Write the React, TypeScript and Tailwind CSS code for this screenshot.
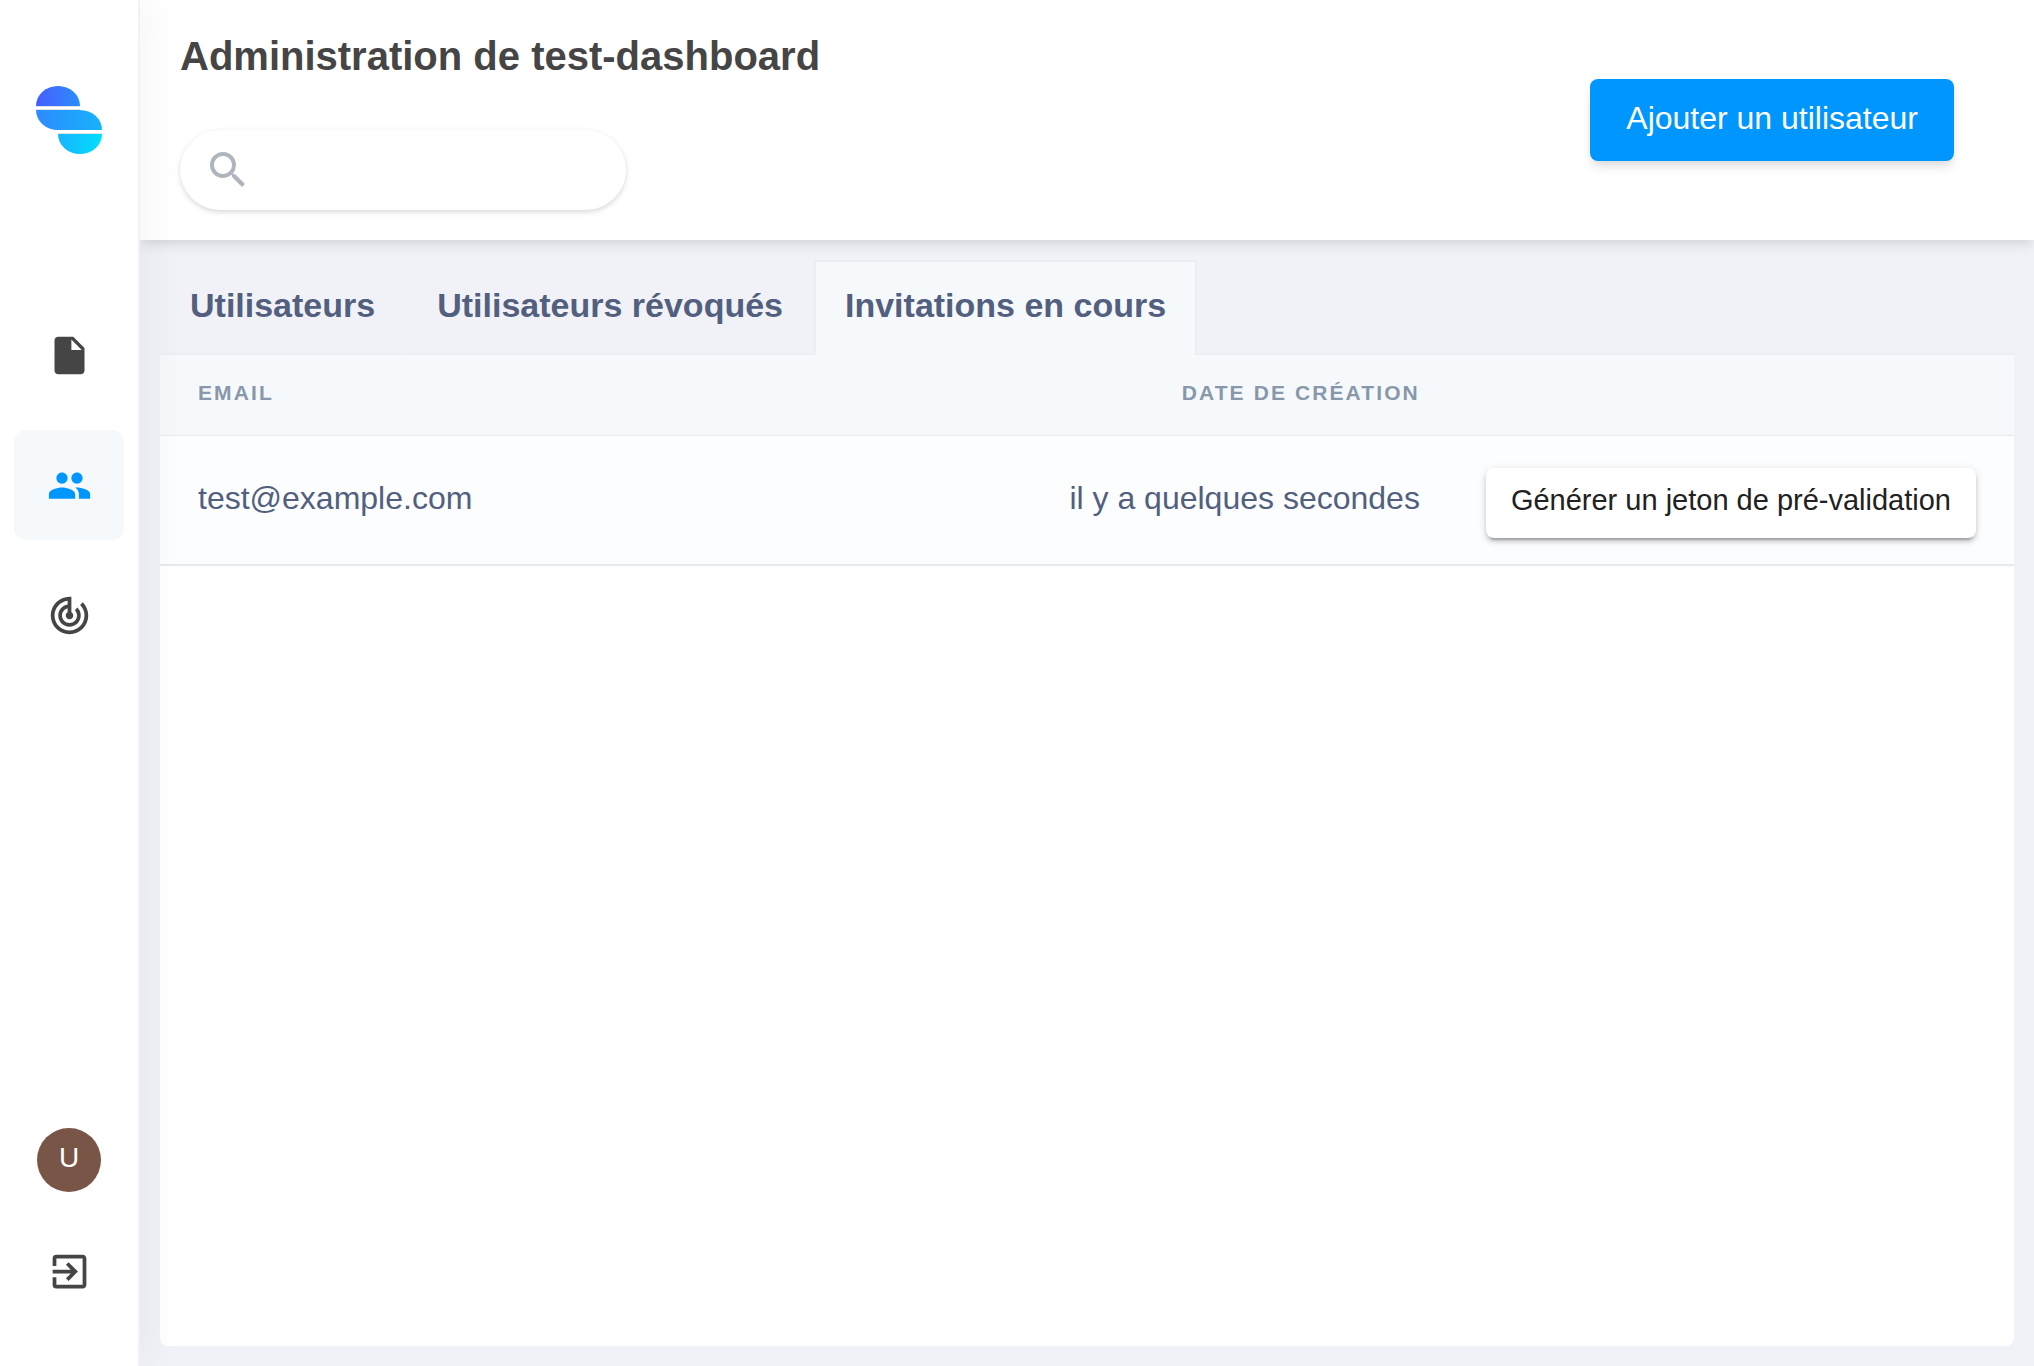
import { useState } from "react"
import {
    MdExitToApp,
    MdInsertDriveFile,
    MdPeople,
    MdSearch,
    MdTrackChanges
} from "react-icons/md"

type Invitation = {
    email: string
    createdAt: string
}

const tabs = ["Utilisateurs", "Utilisateurs révoqués", "Invitations en cours"]

const navItems = [
    { label: "Documents", icon: MdInsertDriveFile },
    { label: "Membres", icon: MdPeople },
    { label: "Suivi", icon: MdTrackChanges }
]

const invitations: Invitation[] = [
    { email: "test@example.com", createdAt: "il y a quelques secondes" }
]

function Logo() {
    return (
        <svg width="66" height="68" viewBox="0 0 66 68" aria-hidden="true">
            <defs>
                <linearGradient id="logo-top">
                    <stop offset="0" stopColor="#465dff" />
                    <stop offset="1" stopColor="#2b8eff" />
                </linearGradient>
                <linearGradient id="logo-middle">
                    <stop offset="0" stopColor="#2d8bff" />
                    <stop offset="1" stopColor="#18b2fb" />
                </linearGradient>
                <linearGradient id="logo-bottom">
                    <stop offset="0" stopColor="#18b4ff" />
                    <stop offset="1" stopColor="#00dffc" />
                </linearGradient>
            </defs>
            <path d="M0 20A22 20 0 0 1 44 20z" fill="url(#logo-top)" />
            <path d="M0 24H44A22 20 0 0 1 66 44H22A22 20 0 0 1 0 24z" fill="url(#logo-middle)" />
            <path d="M22 48H66A22 20 0 0 1 22 48z" fill="url(#logo-bottom)" />
            <path d="M0 20.5H44M0 23.5H44M22 47.5H66" stroke="#dfe3ea" strokeWidth="1" />
        </svg>
    )
}

function Sidebar() {
    const [current, setCurrent] = useState("Membres")

    return (
        <aside className="relative z-10 flex w-[140px] shrink-0 flex-col items-center border-r-2 border-[#f0f2f4] bg-white pt-[86px] pb-10 shadow-[0_0_50px_rgba(20,40,70,0.06)]">
            <a href="#" aria-label="Accueil" className="block">
                <Logo />
            </a>
            <nav className="mt-[146px] flex flex-col gap-5">
                {navItems.map(({ label, icon: Icon }) => (
                    <button
                        key={label}
                        type="button"
                        aria-label={label}
                        onClick={() => setCurrent(label)}
                        className={
                            label === current
                                ? "flex size-[110px] items-center justify-center rounded-xl bg-[#f5f9fc] text-[#0096ff]"
                                : "flex size-[110px] items-center justify-center rounded-xl text-[#454545]"
                        }
                    >
                        <Icon size={45} />
                    </button>
                ))}
            </nav>
            <div className="mt-auto flex flex-col items-center gap-6">
                <div className="flex size-16 items-center justify-center rounded-full bg-[#795548] pb-1 text-[28px] leading-8 text-white">
                    U
                </div>
                <button
                    type="button"
                    aria-label="Se déconnecter"
                    className="flex size-[110px] items-center justify-center text-[#454545]"
                >
                    <MdExitToApp size={45} />
                </button>
            </div>
        </aside>
    )
}

function Header() {
    const [search, setSearch] = useState("")

    return (
        <header className="relative flex items-center justify-between bg-white py-[30px] pr-20 pl-10 shadow-[0_8px_12px_-2px_rgba(0,0,0,0.08),0_4px_8px_-2px_rgba(0,0,0,0.05)]">
            <div className="flex flex-col gap-12">
                <h1 className="text-[40px] leading-[52px] font-bold text-[#454545]">
                    Administration de test-dashboard
                </h1>
                <label className="flex h-20 w-[446px] items-center gap-2 rounded-full bg-white px-6 shadow-[0_2px_6px_rgba(0,0,0,0.1),0_2px_4px_rgba(0,0,0,0.06)]">
                    <MdSearch size={48} className="shrink-0 text-[#adb5bd]" />
                    <input
                        type="search"
                        aria-label="Rechercher"
                        value={search}
                        onChange={(e) => setSearch(e.target.value)}
                        className="w-full min-w-0 bg-transparent text-[32px] text-[#525f7f] outline-none"
                    />
                </label>
            </div>
            <button
                type="button"
                className="h-[82px] rounded-lg bg-[#0096ff] px-9 pb-1 text-[32px] leading-10 text-white shadow-[0_8px_12px_-2px_rgba(0,0,0,0.1),0_4px_8px_-2px_rgba(0,0,0,0.06)]"
            >
                Ajouter un utilisateur
            </button>
        </header>
    )
}

function InvitationsTable() {
    return (
        <table className="w-full border-separate border-spacing-0">
            <thead>
                <tr className="h-[81px] bg-[#f5f9fc] text-[21px] leading-6 tracking-widest text-[#8898aa] uppercase">
                    <th className="border-b border-[#e6eaee] pb-1 pl-[38px] text-left font-bold">Email</th>
                    <th className="w-px border-b border-[#e6eaee] pb-1 text-right font-bold whitespace-nowrap">
                        Date de création
                    </th>
                    <th className="w-px border-b border-[#e6eaee]"></th>
                </tr>
            </thead>
            <tbody>
                {invitations.map((invitation) => (
                    <tr key={invitation.email} className="bg-[#fcfdff] text-[32px] leading-10 text-[#525f7f]">
                        <td className="border-b-2 border-[#e6eaee] pb-1 pl-[38px]">{invitation.email}</td>
                        <td className="w-px border-b-2 border-[#e6eaee] pb-1 text-right whitespace-nowrap">
                            {invitation.createdAt}
                        </td>
                        <td className="w-px border-b-2 border-[#e6eaee] pt-8 pr-[38px] pb-[26px] pl-[66px]">
                            <button
                                type="button"
                                className="block h-[70px] rounded-lg bg-white px-[25px] pb-1.5 text-[29px] leading-9 whitespace-nowrap text-[#212121] shadow-[0_6px_2px_-4px_rgba(0,0,0,0.2),0_4px_4px_rgba(0,0,0,0.14),0_2px_10px_rgba(0,0,0,0.12)]"
                            >
                                Générer un jeton de pré-validation
                            </button>
                        </td>
                    </tr>
                ))}
            </tbody>
        </table>
    )
}

export default function App() {
    const [activeTab, setActiveTab] = useState(tabs[2])

    return (
        <div className="flex min-h-screen bg-[#f1f2f7] font-['Liberation_Sans',Arial,sans-serif]">
            <Sidebar />
            <main className="flex min-w-0 flex-1 flex-col">
                <Header />
                <section className="flex flex-1 flex-col p-5">
                    <div role="tablist" className="-ml-px flex">
                        {tabs.map((tab) => (
                            <button
                                key={tab}
                                type="button"
                                role="tab"
                                aria-selected={tab === activeTab}
                                onClick={() => setActiveTab(tab)}
                                className={
                                    tab === activeTab
                                        ? "h-[95px] border-2 border-b-0 border-[#eceff2] bg-[#f5f9fc] px-[29px] pb-2 text-[34px] leading-10 font-bold text-[#525f7f]"
                                        : "h-[95px] border-2 border-transparent border-b-[#eceff2] px-[29px] pb-1.5 text-[34px] leading-10 font-bold text-[#525f7f]"
                                }
                            >
                                {tab}
                            </button>
                        ))}
                        <div className="flex-1 border-b-2 border-[#eceff2]"></div>
                    </div>
                    <div className="flex-1 overflow-hidden rounded-b-lg bg-white">
                        <InvitationsTable />
                    </div>
                </section>
            </main>
        </div>
    )
}
